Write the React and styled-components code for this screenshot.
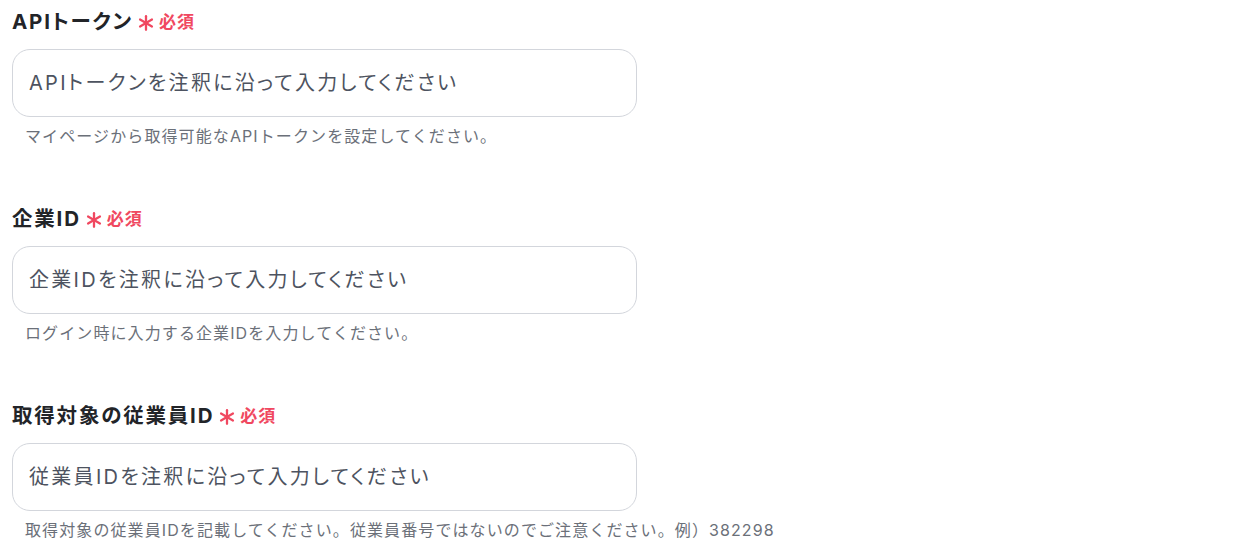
import React from "react";
import styled, { createGlobalStyle } from "styled-components";

const GlobalStyle = createGlobalStyle`
  html, body {
    margin: 0;
    padding: 0;
    background: #ffffff;
  }
  body {
    font-family: Inter, "Noto Sans CJK JP", sans-serif;
  }
`;

const Form = styled.div`
  display: flex;
  flex-direction: column;
  gap: 57px;
  padding: 6px 0 0 12px;
  width: 625px;
`;

const Field = styled.div`
  display: flex;
  flex-direction: column;
`;

const Label = styled.div`
  display: flex;
  align-items: center;
  height: 28px;
  margin-bottom: 15px;
  font-size: 20.5px;
  font-weight: 700;
  letter-spacing: 1.8px;
  font-feature-settings: "palt";
  color: #222428;
`;

const Required = styled.span`
  display: inline-flex;
  align-items: center;
  margin-left: 5px;
  font-size: 17px;
  font-weight: 700;
  letter-spacing: 1px;
  color: #f04860;

  & svg {
    margin-top: 5px;
    margin-right: 5px;
  }
`;

const Input = styled.input`
  box-sizing: border-box;
  height: 68px;
  width: 625px;
  padding: 0 16px;
  border: 1px solid #d3d6dc;
  border-radius: 18px;
  font-family: inherit;
  font-feature-settings: "palt";
  font-size: 20px;
  letter-spacing: 2.3px;
  color: #333;
  background: #fff;
  outline: none;

  &::placeholder {
    color: #4d5360;
  }
`;

const Help = styled.div`
  height: 20px;
  line-height: 20px;
  margin-top: 9px;
  padding-left: 13px;
  font-size: 16px;
  letter-spacing: 1.1px;
  color: #6b7079;
  white-space: nowrap;
`;

const Asterisk = () => (
  <svg width="16" height="16" viewBox="0 0 14 14">
    <g stroke="#f04860" strokeWidth="2" strokeLinecap="round">
      <line x1="7" y1="1" x2="7" y2="13" />
      <line x1="1.8" y1="4" x2="12.2" y2="10" />
      <line x1="1.8" y1="10" x2="12.2" y2="4" />
    </g>
  </svg>
);

const fields = [
  {
    label: "APIトークン",
    placeholder: "APIトークンを注釈に沿って入力してください",
    help: "マイページから取得可能なAPIトークンを設定してください。",
  },
  {
    label: "企業ID",
    placeholder: "企業IDを注釈に沿って入力してください",
    help: "ログイン時に入力する企業IDを入力してください。",
  },
  {
    label: "取得対象の従業員ID",
    placeholder: "従業員IDを注釈に沿って入力してください",
    help: "取得対象の従業員IDを記載してください。従業員番号ではないのでご注意ください。例）382298",
  },
];

export default function App() {
  return (
    <>
      <GlobalStyle />
      <Form>
        {fields.map((f) => (
          <Field key={f.label}>
            <Label>
              {f.label}
              <Required>
                <Asterisk />
                必須
              </Required>
            </Label>
            <Input placeholder={f.placeholder} />
            <Help>{f.help}</Help>
          </Field>
        ))}
      </Form>
    </>
  );
}
